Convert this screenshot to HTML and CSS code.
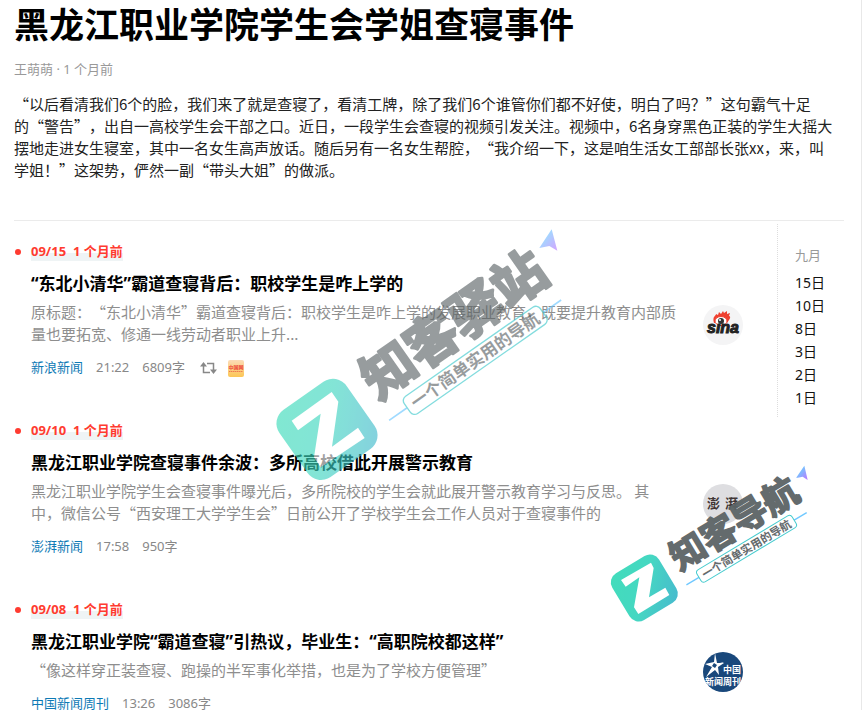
FILE: index.html
```html
<!DOCTYPE html>
<html lang="zh-CN">
<head>
<meta charset="utf-8">
<meta name="viewport" content="width=device-width, initial-scale=1">
<title>黑龙江职业学院学生会学姐查寝事件</title>
<link rel="stylesheet" href="styles.css">
</head>
<body>
<div class="page">
  <header class="topic">
    <h1 class="topic-title">黑龙江职业学院学生会学姐查寝事件</h1>
    <p class="byline">王萌萌 · 1 个月前</p>
    <p class="intro">“以后看清我们6个的脸，我们来了就是查寝了，看清工牌，除了我们6个谁管你们都不好使，明白了吗？”这句霸气十足<br>的“警告”，出自一高校学生会干部之口。近日，一段学生会查寝的视频引发关注。视频中，6名身穿黑色正装的学生大摇大<br>摆地走进女生寝室，其中一名女生高声放话。随后另有一名女生帮腔，“我介绍一下，这是咱生活女工部部长张xx，来，叫<br>学姐！”这架势，俨然一副“带头大姐”的做派。</p>
  </header>

  <div class="columns">
    <main class="timeline">
      <article class="entry">
        <p class="entry-date"><span class="mark">09/15&nbsp; 1 个月前</span></p>
        <div class="entry-body">
          <div class="entry-text">
            <h2 class="entry-title">“东北小清华”霸道查寝背后：职校学生是咋上学的</h2>
            <p class="snippet">原标题：“东北小清华”霸道查寝背后：职校学生是咋上学的发展职业教育，既要提升教育内部质<br>量也要拓宽、修通一线劳动者职业上升...</p>
            <div class="meta">
              <a href="#sina">新浪新闻</a><span>21:22</span><span>6809字</span>
              <span class="reposts">
                <svg class="repost" viewBox="0 0 17 12" aria-hidden="true"><path d="M3.5 3v7.500H10M7 1.500h6.500V9" fill="none" stroke="#888" stroke-width="1.500"/><path d="M0 4.500 3.500 0 7 4.500zM10 7.500h7L13.500 12z" fill="#888"/></svg>
                <svg class="source-badge" viewBox="0 0 16 17" aria-hidden="true"><defs><linearGradient id="badge" x2="0" y2="1"><stop stop-color="#fcdcb8"/><stop offset="1" stop-color="#fcc655"/></linearGradient></defs><rect width="16" height="17" rx="2" fill="url(#badge)"/><text x="8" y="9" text-anchor="middle" font-size="5" font-weight="700" fill="#ed4338">中国网</text><path d="M1 11.500h14" stroke="#ef7c50" stroke-dasharray="1.500 .5"/></svg>
              </span>
            </div>
          </div>
          <svg class="avatar" viewBox="0 0 40 40" role="img" aria-label="新浪"><circle cx="20" cy="20" r="20" fill="#f4f4f5"/><path d="M11 18c-2-7 2-7 2-9l2 1 1-3 2 2 2-3 1 2 3-2 0 3 3-1-1 3c2 0 1 3 0 4l-2 3c0-6-10-6-12 0z" fill="#ef4130"/><ellipse cx="18" cy="16" rx="6" ry="4.500" fill="#fff" stroke="#ef4130"/><circle cx="18" cy="16" r="3" fill="#333"/><circle cx="17" cy="15" r="1" fill="#fff"/><text class="sina-word" x="20" y="28" text-anchor="middle">sına</text></svg>
        </div>
      </article>

      <article class="entry">
        <p class="entry-date"><span class="mark">09/10&nbsp; 1 个月前</span></p>
        <div class="entry-body">
          <div class="entry-text">
            <h2 class="entry-title">黑龙江职业学院查寝事件余波：多所高校借此开展警示教育</h2>
            <p class="snippet">黑龙江职业学院学生会查寝事件曝光后，多所院校的学生会就此展开警示教育学习与反思。 其<br>中，微信公号“西安理工大学学生会”日前公开了学校学生会工作人员对于查寝事件的</p>
            <div class="meta"><a href="#pengpai">澎湃新闻</a><span>17:58</span><span>950字</span></div>
          </div>
          <svg class="avatar" viewBox="0 0 40 40" role="img" aria-label="澎湃"><circle cx="20" cy="20" r="20" fill="#dedee1"/><text class="pengpai-word" x="4" y="24">澎</text><text class="pengpai-word" x="22" y="24">湃</text></svg>
        </div>
      </article>

      <article class="entry">
        <p class="entry-date"><span class="mark">09/08&nbsp; 1 个月前</span></p>
        <div class="entry-body">
          <div class="entry-text">
            <h2 class="entry-title">黑龙江职业学院“霸道查寝”引热议，毕业生：“高职院校都这样”</h2>
            <p class="snippet">“像这样穿正装查寝、跑操的半军事化举措，也是为了学校方便管理”</p>
            <div class="meta"><a href="#zgxwzk">中国新闻周刊</a><span>13:26</span><span>3086字</span></div>
          </div>
          <svg class="avatar" viewBox="0 0 40 40" role="img" aria-label="中国新闻周刊"><defs><clipPath id="disc"><circle cx="20" cy="20" r="20"/></clipPath></defs><g clip-path="url(#disc)"><path d="M0 0h40v40H0z" fill="#19487b"/><path d="m12 1-1 9-9 2 7 3-6 10 9-7 4 5-1-8 6-4-7 0z" fill="#fff"/><path d="m11 11-2 3 3 2 2-3z" fill="#19487b"/><path d="m17 11 4-1-3 2z" fill="#fff"/><text class="weekly-word" x="20" y="21">中国</text><text class="weekly-word" x="2" y="33">新闻周刊</text></g></svg>
        </div>
      </article>
    </main>

    <nav class="days" aria-label="九月">
      <p class="month">九月</p>
      <ul>
        <li><a href="#d15">15日</a></li>
        <li><a href="#d10">10日</a></li>
        <li><a href="#d8">8日</a></li>
        <li><a href="#d3">3日</a></li>
        <li><a href="#d2">2日</a></li>
        <li><a href="#d1">1日</a></li>
      </ul>
    </nav>
  </div>

  <svg class="stamp stamp-large" viewBox="0 0 960 810" aria-hidden="true">
    <defs>
      <linearGradient id="teal" x2="1" y2="1"><stop stop-color="#38dcb8"/><stop offset=".5" stop-color="#3cd5bf"/><stop offset="1" stop-color="#3eb5cd"/></linearGradient>
      <linearGradient id="arrow" x2="1" y2="1"><stop offset=".3" stop-color="#69c6ff"/><stop offset="1" stop-color="#bb6fff"/></linearGradient>
    </defs>
    <g transform="translate(201 628) rotate(-35)">
      <rect x="-123" y="-123" width="246" height="246" rx="50" fill="url(#teal)"/>
      <path d="M168 85h66M732 85h66" stroke="#69c6ff" stroke-width="5"/>
      <rect x="234" y="54" width="498" height="63" rx="16" fill="none" stroke="#3cc9cc" stroke-width="4"/>
      <text class="stamp-name" x="174" y="18" font-size="159" stroke-width="8">知客驿站</text>
      <text class="stamp-line" x="253" y="104" font-size="51">一个简单实用的导航</text>
    </g>
    <path d="M95 602 215 516 235 545 216 680 294 623 314 654 182 742 162 712 182 581 114 631z" fill="#fff"/>
    <path d="m875 28 17 64-24-14-30 6z" fill="url(#arrow)"/>
  </svg>

  <svg class="stamp stamp-small" viewBox="0 0 828 540" aria-hidden="true">
    <g transform="translate(163 414) rotate(-31)">
      <rect x="-82" y="-82" width="164" height="164" rx="32" fill="url(#teal)"/>
      <path d="M113 57h44M490 57h44" stroke="#69c6ff" stroke-width="4"/>
      <rect x="157" y="36" width="333" height="42" rx="10" fill="none" stroke="#3cc9cc" stroke-width="3"/>
      <text class="stamp-name" x="116" y="12" font-size="107" stroke-width="5">知客导航</text>
      <text class="stamp-line" x="170" y="70" font-size="34">一个简单实用的导航</text>
    </g>
    <path d="M93 390 183 338 191 354 177 442 226 413 238 435 145 492 132 472 148 382 107 410z" fill="#fff"/>
    <path d="m643 47 10 43-15-10-20 4z" fill="url(#arrow)"/>
  </svg>
</div>
</body>
</html>
```

FILE: styles.css
```css
* { box-sizing: border-box; }

body, h1, h2, p, ul { margin: 0; padding: 0; }

body {
  background: #fff;
  color: #222;
  font-family: "Noto Sans", "Noto Sans CJK SC", sans-serif;
  font-size: 13px;
  line-height: 20px;
  text-spacing-trim: space-all;
}

a { text-decoration: none; }

.page {
  position: relative;
  min-height: 100vh;
  margin-right: 4px;
  padding: 0 17px 0 14px;
  overflow: hidden;
  border-right: 1px solid #e8e8e8;
}

.topic {
  padding-bottom: 39px;
  border-bottom: 1px solid #ebebeb;
}

.topic-title {
  color: #000;
  font-size: 35px;
  line-height: 49px;
}

.byline {
  margin-top: 10px;
  color: #999;
}

.intro, .snippet {
  font-family: "Noto Sans CJK SC", sans-serif;
  font-size: 15px;
  line-height: 22px;
  white-space: nowrap;
}

.intro { margin-top: 14px; }

.columns {
  display: grid;
  grid-template-columns: 1fr 67px;
  align-items: start;
}

.timeline {
  display: flex;
  flex-direction: column;
  gap: 45px;
  padding: 20px 34px 0 17px;
}

.entry-date {
  position: relative;
  color: #ff3b30;
  font-weight: 700;
}

.entry-date::before {
  content: "";
  position: absolute;
  top: 8px;
  left: -16px;
  width: 6px;
  height: 6px;
  border-radius: 50%;
  background: #ff3b30;
}

.mark {
  display: inline-block;
  background: linear-gradient(transparent 60%, #eff4f5 60%);
}

.entry-body {
  display: grid;
  grid-template-columns: 1fr 40px;
  gap: 18px;
  align-items: center;
  margin-top: 10px;
}

.entry-text { min-width: 0; }

.entry-title {
  color: #000;
  font-size: 17px;
  line-height: 26px;
}

.snippet {
  margin-top: 4px;
  color: #8e8e8e;
}

.meta {
  display: flex;
  gap: 13px;
  margin-top: 14px;
  color: #888;
  line-height: 16px;
}

.meta a { color: #0d7ab5; }

.reposts {
  display: flex;
  align-items: center;
  gap: 11px;
  height: 16px;
  padding: 2px 0 0 2px;
}

.repost { width: 17px; height: 12px; }

.source-badge { width: 16px; height: 17px; }

.avatar {
  width: 40px;
  height: 40px;
  margin-top: 4px;
}

.sina-word {
  font: italic 700 16px "Liberation Sans", sans-serif;
  fill: #222;
  stroke: #222;
}

.pengpai-word {
  font: 700 13px "Noto Sans CJK SC", sans-serif;
  fill: #403635;
}

.weekly-word {
  font: 700 9px "Noto Sans CJK SC", sans-serif;
  fill: #fff;
}

.days {
  margin-top: 3px;
  padding: 20px 0 8px 17px;
  border-left: 1px dotted #ddd;
  font-size: 14px;
  line-height: 23px;
}

.month {
  margin-bottom: 4px;
  color: #999;
  font-size: 13px;
}

.days ul { list-style: none; }

.days a { color: #111; }

.stamp {
  position: absolute;
  pointer-events: none;
}

.stamp-large {
  top: 220px;
  left: 260px;
  width: 320px;
  height: 270px;
  opacity: .63;
}

.stamp-small {
  top: 450px;
  left: 590px;
  width: 276px;
  height: 180px;
  opacity: .95;
}

.stamp-name, .stamp-line {
  font-family: "Noto Sans CJK SC", sans-serif;
  font-weight: 700;
  fill: #5c6466;
}

.stamp-name {
  stroke: #5c6466;
  stroke-linejoin: round;
}
```
